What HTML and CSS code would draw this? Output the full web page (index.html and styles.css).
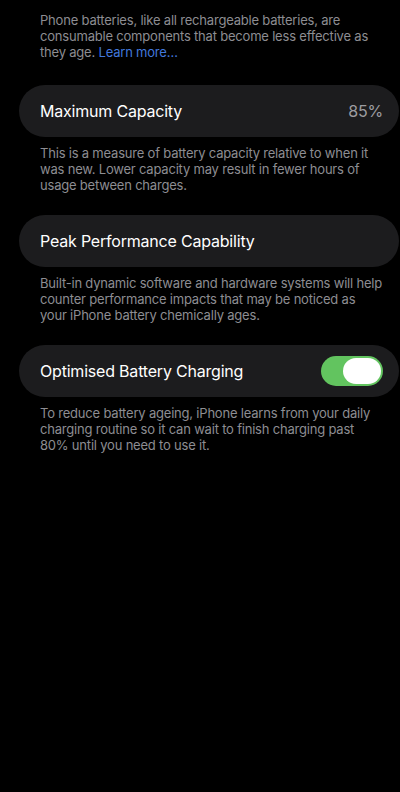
FILE: index.html
```html
<!DOCTYPE html>
<html lang="en">

<head>
  <meta charset="UTF-8">
  <meta name="viewport" content="width=device-width, initial-scale=1.0">
  <title>Battery Health</title>
  <link rel="stylesheet" href="styles.css">
</head>

<body>
  <div class="screen">

    <p class="note">Phone batteries, like all rechargeable batteries, are<br>
      consumable components that become less effective as<br>
      they age. <span class="link">Learn more…</span></p>

    <!-- 最大容量 -->
    <div class="row">
      <span class="row-title">Maximum Capacity</span>
      <span class="row-value">85%</span>
    </div>
    <p class="note">This is a measure of battery capacity relative to when it<br>
      was new. Lower capacity may result in fewer hours of<br>
      usage between charges.</p>

    <div class="row">
      <span class="row-title">Peak Performance Capability</span>
    </div>
    <p class="note">Built-in dynamic software and hardware systems will help<br>
      counter performance impacts that may be noticed as<br>
      your iPhone battery chemically ages.</p>

    <div class="row">
      <span class="row-title">Optimised Battery Charging</span>
      <div class="toggle on">
        <div class="knob"></div>
      </div>
    </div>
    <p class="note">To reduce battery ageing, iPhone learns from your daily<br>
      charging routine so it can wait to finish charging past<br>
      80% until you need to use it.</p>

  </div>
</body>

</html>
```

FILE: styles.css
```css
* {
  box-sizing: border-box;
  margin: 0;
  padding: 0;
}

body {
  background: #000;
  font-family: Inter, 'Noto Sans', sans-serif;
  overflow: hidden;
}

.screen {
  width: 400px;
  height: 792px;
  padding-top: 12px;
}

/* 說明文字 */
.note {
  color: #8d8d92;
  font-size: 13px;
  line-height: 16px;
  letter-spacing: -0.2px;
  padding: 0 0 0 40px;
  margin: 8px 0 22px;
  white-space: nowrap;
}

.note:first-child {
  margin: 0 0 25px;
}

.link {
  color: #4278dc;
}

.row {
  display: flex;
  align-items: center;
  justify-content: space-between;
  width: 380px;
  height: 52px;
  margin-left: 19px;
  padding: 0 16px 0 21px;
  background: #1c1c1e;
  border-radius: 26px;
}

.row-title {
  color: #fff;
  font-size: 16px;
  letter-spacing: -0.2px;
}

.row-value {
  color: #9c9ca1;
  font-size: 16px;
  letter-spacing: -0.2px;
}

.toggle {
  width: 62px;
  height: 30px;
  border-radius: 15px;
  background: #3a3a3c;
  display: flex;
  align-items: center;
  padding: 0 2px;
}

.toggle.on {
  background: #62c45f;
  justify-content: flex-end;
}

.knob {
  width: 38px;
  height: 26px;
  border-radius: 13px;
  background: #fff;
}
```
